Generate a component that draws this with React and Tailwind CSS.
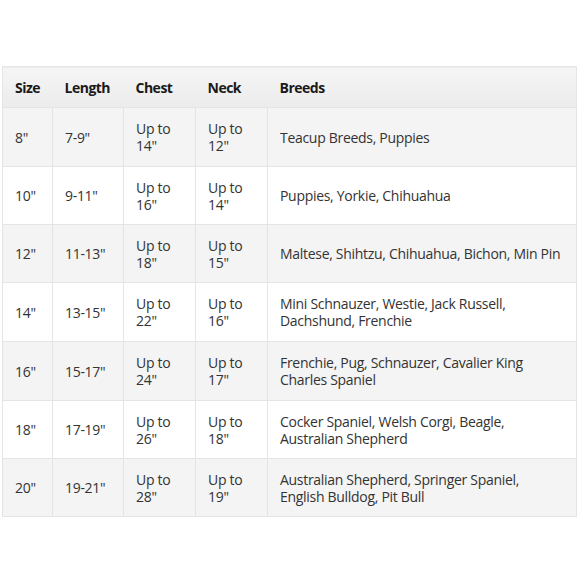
import React from "react";

const rows = [
  ["8\"", "7-9\"", "Up to 14\"", "Up to 12\"", "Teacup Breeds, Puppies", "h-[59px]"],
  ["10\"", "9-11\"", "Up to 16\"", "Up to 14\"", "Puppies, Yorkie, Chihuahua", "h-[58px]"],
  ["12\"", "11-13\"", "Up to 18\"", "Up to 15\"", "Maltese, Shihtzu, Chihuahua, Bichon, Min Pin", "h-[58px]"],
  ["14\"", "13-15\"", "Up to 22\"", "Up to 16\"", "Mini Schnauzer, Westie, Jack Russell,\nDachshund, Frenchie", "h-[59px]"],
  ["16\"", "15-17\"", "Up to 24\"", "Up to 17\"", "Frenchie, Pug, Schnauzer, Cavalier King\nCharles Spaniel", "h-[59px]"],
  ["18\"", "17-19\"", "Up to 26\"", "Up to 18\"", "Cocker Spaniel, Welsh Corgi, Beagle,\nAustralian Shepherd", "h-[58px]"],
  ["20\"", "19-21\"", "Up to 28\"", "Up to 19\"", "Australian Shepherd, Springer Spaniel,\nEnglish Bulldog, Pit Bull", "h-[58px]"],
];

export default function App() {
  return (
    <div className="w-[580px] h-[580px] bg-white pt-[66px] pl-[2px]" style={{ fontFamily: '"Open Sans", "Noto Sans", sans-serif' }}>
      <table className="table-fixed border-collapse w-[574px] text-[14px] leading-[17px] text-[#333] tracking-[-0.3px]">
        <colgroup>
          <col className="w-[50px]" />
          <col className="w-[71px]" />
          <col className="w-[72px]" />
          <col className="w-[72px]" />
          <col className="w-[309px]" />
        </colgroup>
        <thead>
          <tr className="h-[41px] bg-gradient-to-b from-[#f5f5f5] to-[#ececec] border border-[#e6e6e6]">
            {["Size", "Length", "Chest", "Neck", "Breeds"].map((h) => (
              <th key={h} className="text-left font-bold text-[#1a1a1a] pl-[12px] pr-[8px] align-middle tracking-[-0.5px]">{h}</th>
            ))}
          </tr>
        </thead>
        <tbody>
          {rows.map((r, i) => (
            <tr key={i} className={`${r[5]} ${i % 2 === 0 ? "bg-[#f4f4f4]" : "bg-white"}`}>
              {r.slice(0, 4).map((c, j) => (
                <td key={j} className="border border-[#e4e4e4] pl-[12px] pr-[10px] align-middle">{c}</td>
              ))}
              <td className="border border-[#e4e4e4] pl-[12px] pr-[6px] align-middle whitespace-pre-line">{r[4]}</td>
            </tr>
          ))}
        </tbody>
      </table>
    </div>
  );
}
